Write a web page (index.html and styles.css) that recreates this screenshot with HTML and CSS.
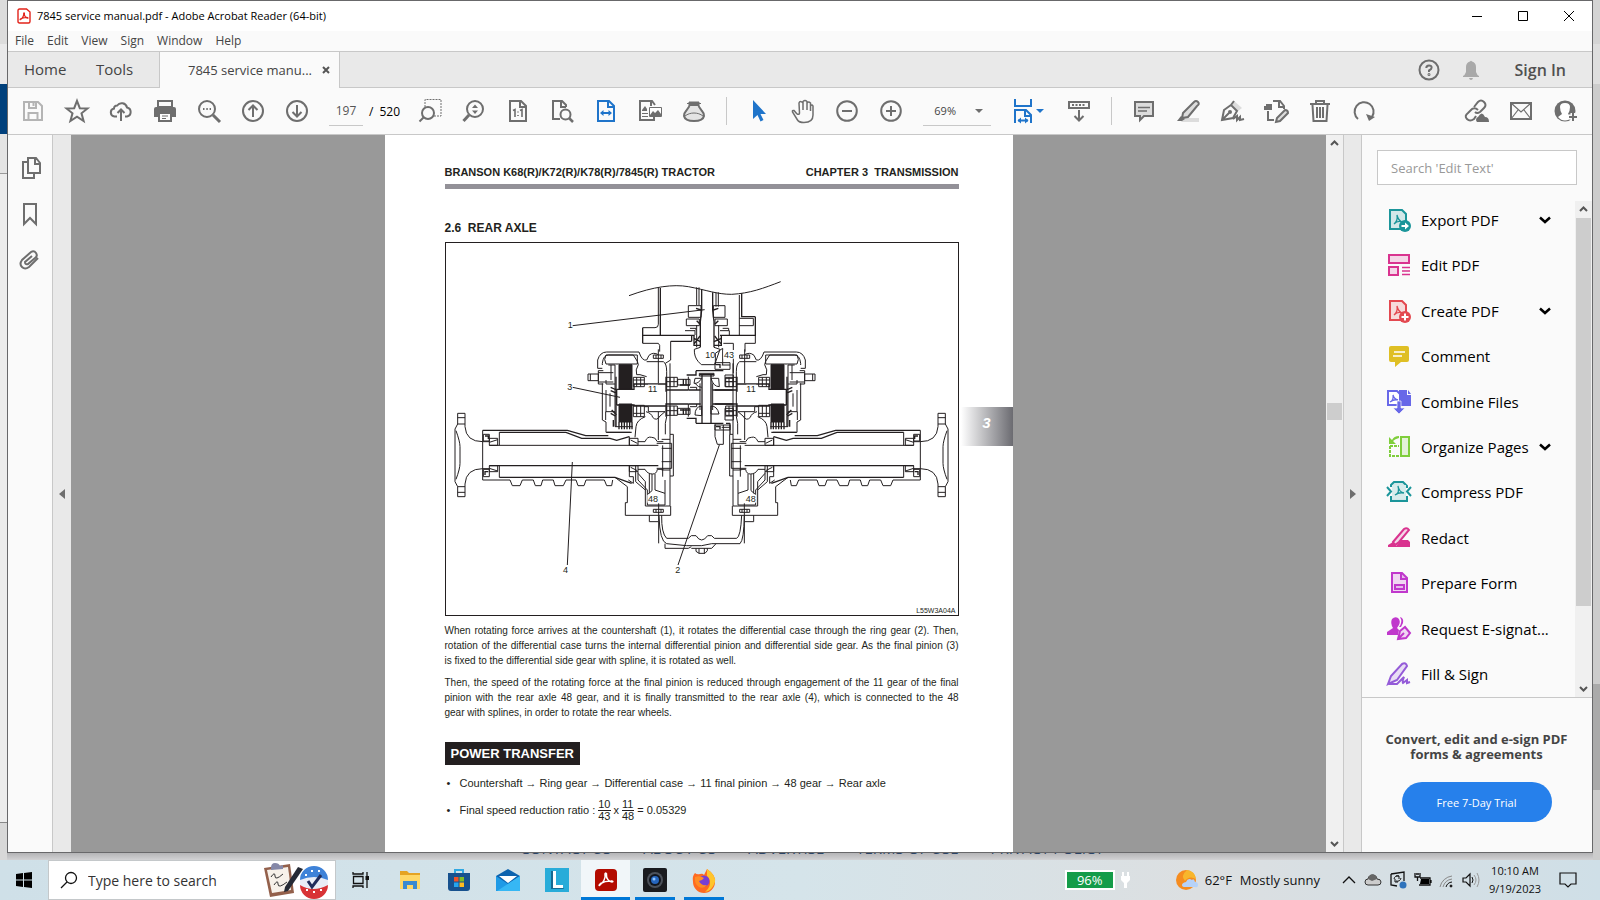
FILE: index.html
```html
<!DOCTYPE html>
<html lang="en">

<head>
    <meta charset="UTF-8">
    <meta name="viewport" content="width=device-width, initial-scale=1.0">
    <title>7845 service manual.pdf - Adobe Acrobat Reader (64-bit)</title>
    <link rel="stylesheet" href="styles.css">
</head>

<body>
    <div class="desktop">
        <div class="window">
            <!-- Title bar -->
            <header class="title-bar">
                <svg class="app-icon" width="14" height="16" viewBox="0 0 14 16"><path d="M1 2.5Q1 1 2.500 1H9.500L13 4V13.500Q13 15 11.500 15H2.500Q1 15 1 13.500Z" fill="#fff" stroke="#e2231a" stroke-width="1.400"/><path d="M3.500 11.500C5.500 10.500 7 7.500 6.700 5.500C6.500 4.500 7.600 4.500 7.400 5.700C7 8 9 10 10.500 10.200C11.500 10.300 11 9.200 9.500 9.300C7 9.400 5 10 3.800 10.700C2.800 11.300 3 12 3.500 11.500" fill="none" stroke="#e2231a" stroke-width="1.200"/></svg>
                <h1>7845 service manual.pdf - Adobe Acrobat Reader (64-bit)</h1>
                <div class="window-controls">
                    <button aria-label="Minimize"><svg width="12" height="12"><path d="M1 6.500H11"/></svg></button>
                    <button aria-label="Maximize"><svg width="12" height="12"><path d="M1.500 1.500H10.500V10.500H1.500Z"/></svg></button>
                    <button aria-label="Close"><svg width="12" height="12"><path d="M1 1L11 11M11 1L1 11"/></svg></button>
                </div>
            </header>

            <nav class="menu-bar">
                <a href="#">File</a>
                <a href="#">Edit</a>
                <a href="#">View</a>
                <a href="#">Sign</a>
                <a href="#">Window</a>
                <a href="#">Help</a>
            </nav>

            <!-- Tabs -->
            <div class="tab-bar">
                <a href="#" class="tab-link">Home</a>
                <a href="#" class="tab-link">Tools</a>
                <div class="tab">
                    <span>7845 service manu...</span>
                    <button aria-label="Close tab"><svg width="10" height="10"><path d="M2 2L8 8M8 2L2 8" stroke="#555" stroke-width="2"/></svg></button>
                </div>
                <div class="account">
                    <button aria-label="Help"><svg width="24" height="24" class="ico"><circle cx="12" cy="12" r="9.500"/><path d="M9.300 10Q9.300 7.500 12 7.500T14.600 9.800Q14.600 11.200 12 12.500V14"/><circle cx="12" cy="16.500" r=".5"/></svg></button>
                    <button aria-label="Notifications"><svg width="24" height="24"><path d="M11 3.500Q12 2 13 3.500Q17 4.500 17 9V14Q18 17 20 18V19H4V18Q6 17 7 14V9Q7 4.500 11 3.500ZM10 20H14Q13.500 22 12 22T10 20Z" fill="#a9a9a9"/></svg></button>
                    <a href="#" class="sign-in">Sign In</a>
                </div>
            </div>

            <!-- Toolbar -->
            <div class="toolbar">
                <button aria-label="Save" class="muted"><svg width="24" height="24" class="ico"><path d="M3 3H17L21 7V21H3Z"/><path d="M8 3V9H15V3M12.500 4V7M7.500 21V14H16.500V21"/></svg></button>
                <button aria-label="Star"><svg width="24" height="24" class="ico"><path d="M12 1.800L14.800 9.200L22.500 9.500L16.500 14.300L18.600 22L12 17.600L5.400 22L7.500 14.300L1.500 9.500L9.200 9.200Z"/></svg></button>
                <button aria-label="Upload"><svg width="24" height="24" class="ico"><path d="M8 17.500H5.500A4 4 0 0 1 5 9.600A3 3 0 0 1 8.200 6.500A5.500 5.500 0 0 1 18 8.500A4.600 4.600 0 0 1 18 17.500H16M12 22V11M8.500 14L12 10.500L15.500 14"/></svg></button>
                <button aria-label="Print"><svg width="24" height="24"><path d="M5 2H19V8H5Z" fill="none" stroke="#6e6e6e" stroke-width="2"/><path d="M3 8H21Q23 8 23 10V18H1V10Q1 8 3 8Z" fill="#6e6e6e"/><path d="M6 14H18V22H6Z" fill="#fff" stroke="#6e6e6e" stroke-width="2"/><path d="M9 17H15M9 19.500H13" stroke="#6e6e6e"/></svg></button>
                <button aria-label="Find"><svg width="24" height="24" class="ico"><circle cx="10" cy="10" r="8"/><path d="M16 16L23 23" stroke-width="3"/><path d="M6 10H7.500M9.300 10H10.800M12.600 10H14"/></svg></button>
                <button aria-label="Previous page"><svg width="24" height="24" class="ico"><circle cx="12" cy="12" r="10"/><path d="M12 18V7M7.500 11L12 6.500L16.500 11"/></svg></button>
                <button aria-label="Next page"><svg width="24" height="24" class="ico"><circle cx="12" cy="12" r="10"/><path d="M12 6V17M7.500 13L12 17.500L16.500 13"/></svg></button>
                <div class="page-number">
                    <input type="text" value="197" aria-label="Page number">
                    <span>/</span>
                    <span>520</span>
                </div>
                <button aria-label="Marquee zoom"><svg width="24" height="24" class="ico"><path d="M7 8V.5H23V17H16" stroke-width="1" stroke-dasharray="2 1"/><circle cx="10" cy="14" r="6"/><path d="M5.500 18.500L1.500 22.500"/></svg></button>
                <button aria-label="Dynamic zoom"><svg width="24" height="24" class="ico"><circle cx="13" cy="10" r="8"/><path d="M7 16L1.500 22" stroke-width="3"/><path d="M10 9L13 5.500L16 9ZM10 11.500L13 15L16 11.500Z" fill="#6e6e6e" stroke="none"/></svg></button>
                <button aria-label="Actual size"><svg width="24" height="24" class="ico"><path d="M4 2H15L20 7V22H4ZM14 2V8H20"/><path d="M7 11.500L9 10.500V18M14 11.500L16 10.500V18M12 12.500V13.500M12 16V17" stroke-width="1.600"/></svg></button>
                <button aria-label="Zoom to page"><svg width="24" height="24" class="ico"><path d="M10 20H3V2H12L16 6V8M11 2V8H16"/><circle cx="15.500" cy="15.500" r="5"/><path d="M19 19L23 23" stroke-width="2.500"/></svg></button>
                <button aria-label="Fit width" class="active"><svg width="24" height="24" class="ico"><path d="M4 2H15L20 7V22H4ZM14 2V8H20M7 14H17"/><path d="M9.500 11L6 14L9.500 17ZM14.500 11L18 14L14.500 17Z" fill="currentColor" stroke="none"/></svg></button>
                <button aria-label="Read mode"><svg width="24" height="24" class="ico"><path d="M17 6L14 2H2V21H16V18M13 2V7"/><path d="M11.500 8.500H23.500V17.500H11.500Z" fill="#fff" stroke-width="1"/><path d="M12 16L15 12L17 14L20 11L23 15V17H12ZM4 11L7 7L9 10V12H4ZM4 14H10V15H4ZM4 17H10V18H4Z" fill="#6e6e6e" stroke="none"/></svg></button>
                <button aria-label="3D view"><svg width="24" height="24" class="ico"><path d="M7 3H17V7H7Z" fill="#6e6e6e" stroke-width="1"/><path d="M7.500 7L4 12Q2 14 2 17Q3 22 12 22T22 17Q22 14 20 12L16.500 7" fill="#e4e4e4"/><path d="M3 17C8 13 16 13 21 17M5 4.500H19" stroke-width="1"/></svg></button>
                <span class="divider"></span>
                <button aria-label="Select" class="active"><svg width="24" height="24"><path d="M6 1V20L10.500 16L13.500 22.500L16.500 21L13.500 15H19Z" fill="#1f74ca"/></svg></button>
                <button aria-label="Hand"><svg width="24" height="24" class="ico thin"><path d="M6 15L3 11.500Q1 11 1.500 13L6.500 21Q8 23.500 13 23.500Q22 23.500 22 16V7Q21 5 19.500 7V12M19.500 8V4Q17.500 2 16 4V11M16 5V2.500Q14 .5 12 2.500V11M12 4Q9 1 8 4L8.500 14Q8.500 16 6 15"/></svg></button>
                <button aria-label="Zoom out"><svg width="24" height="24" class="ico"><circle cx="12" cy="12" r="9.800"/><path d="M7 12H17"/></svg></button>
                <button aria-label="Zoom in"><svg width="24" height="24" class="ico"><circle cx="12" cy="12" r="9.800"/><path d="M7 12H17M12 7V17"/></svg></button>
                <button class="zoom-level"><span>69%</span><i class="caret"></i></button>
                <button aria-label="Page display" class="active"><svg width="24" height="24" class="ico"><path d="M4 0V7H20V0M4 24V11H15L20 16V24M14 11V17H20M7 21.500H17"/><path d="M10 18.500L6.500 21.500L10 24.500ZM14 18.500L17.500 21.500L14 24.500Z" fill="currentColor" stroke="none"/></svg></button>
                <i class="caret caret-blue"></i>
                <button aria-label="Keyboard"><svg width="24" height="24" class="ico"><path d="M2 3H22V9H2Z"/><path d="M5 6H19" stroke-dasharray="2 1.500"/><path d="M12 11V21M7.500 17L12 21.500L16.500 17"/></svg></button>
                <span class="divider"></span>
                <button aria-label="Comment"><svg width="24" height="24" class="ico"><path d="M3 3H21V17H12L8 21V17H3Z" fill="#dcdcdc"/><path d="M6 8.500H18M6 12H15" stroke-width="1.300"/></svg></button>
                <button aria-label="Highlight"><svg width="24" height="24" class="ico"><path d="M8 19H23V23H5Z" fill="#dcdcdc" stroke="none"/><path d="M7 14L18 3Q20 1 22 3T21 7L12 18L6 19Z" fill="#dcdcdc"/><path d="M1 22L5 17L9 20L6 22Z" fill="#6e6e6e" stroke="none"/></svg></button>
                <button aria-label="Sign"><svg width="24" height="24" class="ico"><path d="M14 2L22 9L18 12L12 6Z" fill="#dcdcdc" stroke="none"/><path d="M2 21L4 11L11 6L17 12L13 19ZM11 6L14 2M2 21L9 14"/><circle cx="10" cy="13" r="1" /><path d="M13 20L17 17L17 21L20 18L20 21L24 20"/></svg></button>
                <button aria-label="Edit pages"><svg width="24" height="24" class="ico"><path d="M9 2H16L20 7V10M15 2V8H20M4 12V21H10"/><path d="M0 7H2V5H8V11H0Z" fill="#6e6e6e" stroke="none"/><path d="M12 23L13 19L21 11Q24 11 24 14L16 22Z" fill="#dcdcdc"/></svg></button>
                <button aria-label="Delete"><svg width="24" height="24" class="ico"><path d="M2 5H22M8 5V2H16V5M4.500 6L5.500 22H18.500L19.500 6M9 8V19M12 8V19M15 8V19"/></svg></button>
                <button aria-label="Rotate"><svg width="24" height="24" class="ico"><path d="M6 20A9.500 9.500 0 1 1 20 18"/><path d="M14 15L23 18L17 22Z" fill="#6e6e6e" stroke="none"/></svg></button>
                <div class="share">
                    <button aria-label="Share link"><svg width="24" height="24" class="ico"><path d="M9 8L13 3Q16 0 19 3T19 9L15 13Q12 15 10 13M11 17L9 20Q5 23 2 20T3 14L7 10Q10 8 13 11"/><path d="M12 23A3 3 0 0 1 13 18Q17 11 20 18Q24 18 24 23Z" fill="#6e6e6e" stroke="none"/></svg></button>
                    <button aria-label="Send by mail"><svg width="24" height="24" class="ico"><path d="M2 4H22V20H2Z"/><path d="M2 4L12 13L22 4M2 20L9 11M22 20L15 11" stroke-width="1.200"/></svg></button>
                    <button aria-label="Invite"><svg width="24" height="24"><circle cx="12" cy="12" r="10.500" fill="#6e6e6e"/><path d="M9 15Q7 12 7 8Q7 4 12 4T17 8Q17 12 15 15L19 18Q16 21.500 12 21.500T5 18Z" fill="#fff"/><path d="M20 14V22M16 18H24" stroke="#fafafa" stroke-width="5"/><path d="M20 14V22M16 18H24" stroke="#6e6e6e" stroke-width="2"/></svg></button>
                </div>
            </div>

            <main class="workspace">
                <aside class="nav-rail">
                    <button aria-label="Page thumbnails"><svg width="24" height="24" class="ico"><path d="M10 2H18L22 7V17H10ZM17 2V8H22M9 6H5V22H16V18"/></svg></button>
                    <button aria-label="Bookmarks"><svg width="24" height="24" class="ico"><path d="M6 2H18V22L12 16L6 22Z"/></svg></button>
                    <button aria-label="Attachments"><svg width="24" height="24" class="ico"><path d="M20 10L11 19Q7 22 4 19T4 12L13 4Q16 2 18 5T17 10L10 16Q7 17 7 14L14 8"/></svg></button>
                </aside>
                <button class="collapse" aria-label="Collapse navigation"><i class="arrow-left"></i></button>

                <section class="doc-view">
                    <article class="page">
                        <div class="page-head">
                            <span>BRANSON K68(R)/K72(R)/K78(R)/7845(R) TRACTOR</span>
                            <span>CHAPTER 3&nbsp; TRANSMISSION</span>
                        </div>
                        <h2>2.6&nbsp; REAR AXLE</h2>
                        <figure>
                            <svg class="drawing" viewBox="18 -51 1536 1116">
                                <defs>
                                    <g id="half-axle">
                                        <!-- hub flange -->
                                        <path d="M53 492V460H75V500Q78 545 128 545H148M53 492L45 507V665L53 680V710H75V672Q78 626 128 626H148M53 473H75M53 492H75M53 680H75M53 697H75M48 512Q60 545 60 560V610Q60 626 48 658"/>
                                        <!-- axle tube -->
                                        <path class="bold" d="M128 511H382L437 527H505M178 517H378L425 535H510L530 541L568 530M148 617H655M178 652H525L575 670"/>
                                        <path d="M148 556H655M178 517V556M178 617V652M128 511V660H210L217 677H240L247 660H280L286 677H303L308 660H340L345 677H370L378 660H408L414 677H432L438 660H493L500 677H515L518 660M525 652L562 680V728H556V766H692V738M568 530V556M568 617V650H580V670L565 660"/>
                                        <path d="M130 523H148V543H130ZM130 628H148V650H130ZM148 535H173V556H148ZM148 617H173V635H148ZM148 547L173 539M148 625L173 633M568 535H594V556H568ZM568 617H594V635H568ZM572 540L592 550M572 622L592 632"/>
                                        <path class="bold" d="M135 528H145V537M135 645V635H145"/>
                                        <!-- final gear -->
                                        <path d="M594 545H615Q622 528 635 532Q645 530 652 545H670M594 628H615Q622 642 638 642Q650 642 652 628H670M650 550H695V625H650M665 538H690M665 565H695M665 605H695M665 630H690M700 523V648H690V738H616V690L587 665V617M690 648V523H700M622 735V690L594 660V635M628 700V642M645 642V690L675 700M675 660V735H622M636 642V692L622 704M656 730V850M668 556V650M594 640L616 665V690"/>
                                        <path d="M628 766V785H655M640 748H670V757H640ZM640 285H670V295H640ZM648 748V757M663 748V757M648 285V295M663 285V295"/>
                                        <!-- brake housing -->
                                        <path d="M487 325H473V300Q480 276 500 276H597Q606 304 620 300L627 286Q640 275 655 284M487 315V310Q490 285 505 285H580L592 304M498 285H592V312H498Q490 298 498 285ZM592 304L595 314Q585 330 590 344H600L620 350M620 305H670Q680 310 680 335V470L676 490V523M616 470Q590 480 588 500L585 532M655 268V370M655 455V540M690 310V523M487 370V480L498 486V517H570M498 360V372H525M497 480V455H525M505 315H525V500H578"/>
                                        <path d="M444 342H475V362H444ZM451 342V362M475 332H490M475 332V372H490M475 338H520M475 366H520M513 315V360M498 390V455M510 400V440"/>
                                        <path class="bold" d="M528 350V500M512 382L530 390M512 392L526 398M515 450L530 465M512 460L526 468M520 480V500M500 517H575"/>
                                        <!-- disc packs -->
                                        <path class="solid" d="M537 314H576V388H537ZM537 432H576V486H537Z"/>
                                        <path class="bold" d="M537 486V508M545 486V508M553 486V508M561 486V508M569 486V508M576 486V508"/>
                                        <!-- pinion shaft -->
                                        <path class="bold" d="M530 388H582V372H676M530 435H582V438H676M530 388V435M676 390H745M676 432H745M678 350V395M678 430V470"/>
                                        <path d="M580 352H613V380H580ZM580 436H613V470H580ZM590 352V380M602 352V380M590 436V470M602 436V470M613 440H625V455H675M618 455Q635 460 638 472Q650 485 660 468L675 455M680 352H712V380H680ZM680 438H712V466H680ZM690 352V380M702 352V380M690 438V466M702 438V466M580 360H613M580 460H613M680 365H712M680 452H712"/>
                                    </g>
                                </defs>
                                <g class="ink">
                                    <use href="#half-axle"/>
                                    <use href="#half-axle" transform="translate(1569 0) scale(-1 1)"/>
                                    <!-- upper case -->
                                    <path d="M567 107C640 80 700 72 745 80C800 90 830 103 875 103C930 100 970 85 1022 65"/>
                                    <path class="bold" d="M661 84V226M608 226H763M608 203V250M840 226H946V170M905 100V170H946M692 244H755M755 244V226M608 226V250"/>
                                    <path d="M655 84V193Q655 203 645 203H608M608 250H655L659 256V275M692 244V300L676 310M898 105V226M898 175H940V197H898M946 226V250H915V275M880 250H850M880 250V340M770 82V135M777 82V135M828 97V140M835 97V140"/>
                                    <!-- input shaft and bevel pinion -->
                                    <path class="bold" d="M785 88V150L781 185V262M818 97V150L822 185V262"/>
                                    <path d="M745 137H783V172H745ZM820 137H855V172H820ZM739 177H778V197H739ZM825 177H862V197H825ZM735 212H765V225M840 212H868V225M750 205H768V212M848 205H866V212M770 195V262M836 195V262M781 262L763 268Q762 290 775 305L784 314H824L840 268L822 262M826 315V280L848 265V315"/>
                                    <path class="bold" d="M762 225V256H781M762 235L781 245M763 251L780 228M844 225V256H822M844 235L822 245M842 251L824 228M768 145L783 150M835 145L820 150M770 182L780 192M835 182L825 192"/>
                                    <!-- differential -->
                                    <path class="bold" d="M768 332H850M778 344H822M786 344V490H813V344M745 390H782M745 432H782M818 390H880M818 432H880M768 332V345H740M768 490H850M740 475H768V490M720 375H750M720 450H750"/>
                                    <path d="M778 340H822V348H778ZM765 355H785Q775 372 762 370L765 355M765 370Q775 383 785 382M813 355Q820 380 838 380L836 355ZM765 465Q765 440 785 438V467ZM813 438Q832 438 837 462H813ZM713 358H750V375H713ZM713 445H750V463H713ZM745 350V390M745 432V470M750 382H770V390M750 440H770V432M825 308H870V328H825ZM825 495H870V510H825ZM825 490V530L832 553H850V495M845 315H870M845 502H870M780 370V450M818 370V450M855 345H880V380H855ZM855 445H880V480H855ZM855 355H880M855 365H880M855 455H880M855 468H880"/>
                                    <path class="bold" d="M730 357V375M738 357V375M730 448V463M738 448V463M828 314H840V324M828 500H840V508M870 490V523M858 490H870"/>
                                    <!-- oil pan -->
                                    <path d="M665 766Q664 820 680 835H745L754 827H768Q776 840 785 840T803 827H815L823 835H890Q902 830 905 766"/>
                                    <path d="M657 766Q659 845 680 851L740 857H785L815 851H900Q912 840 913 766M675 851V865H745L754 860M828 851L815 865H754M768 865V874L777 880H795L802 872V865M777 865V880M793 865V880"/>
                                    <!-- leaders -->
                                    <path d="M398 197L794 149M398 382L540 412M397 606L382 915M838 555L714 915"/>
                                </g>
                                <g class="callouts">
                                    <rect x="793" y="270" width="32" height="26"/><rect x="850" y="270" width="34" height="26"/>
                                    <rect x="624" y="374" width="30" height="24"/><rect x="919" y="374" width="30" height="24"/>
                                    <rect x="622" y="704" width="33" height="24"/><rect x="916" y="704" width="33" height="24"/>
                                    <text x="383" y="205">1</text>
                                    <text x="382" y="389">3</text>
                                    <text x="369" y="938">4</text>
                                    <text x="706" y="938">2</text>
                                    <text x="796" y="293">10</text>
                                    <text x="852" y="293">43</text>
                                    <text x="624" y="396">11</text>
                                    <text x="919" y="396">11</text>
                                    <text x="624" y="726">48</text>
                                    <text x="917" y="726">48</text>
                                </g>
                            </svg>
                            <figcaption>L55W3A04A</figcaption>
                        </figure>
                        <p>
                            <span>When rotating force arrives at the countershaft (1), it rotates the differential case through the ring gear (2). Then,</span>
                            <span>rotation of the differential case turns the internal differential pinion and differential side gear. As the final pinion (3)</span>
                            <span>is fixed to the differential side gear with spline, it is rotated as well.</span>
                        </p>
                        <p>
                            <span>Then, the speed of the rotating force at the final pinion is reduced through engagement of the 11 gear of the final</span>
                            <span>pinion with the rear axle 48 gear, and it is finally transmitted to the rear axle (4), which is connected to the 48</span>
                            <span>gear with splines, in order to rotate the rear wheels.</span>
                        </p>
                        <h3>POWER TRANSFER</h3>
                        <ul class="notes">
                            <li>Countershaft → Ring gear → Differential case → 11 final pinion → 48 gear → Rear axle</li>
                            <li>
                                <span>Final speed reduction ratio :</span>
                                <span class="fraction"><span>10</span><span>43</span></span>
                                <span>x</span>
                                <span class="fraction"><span>11</span><span>48</span></span>
                                <span>= 0.05329</span>
                            </li>
                        </ul>
                        <div class="chapter-tab">3</div>
                    </article>
                </section>

                <div class="scrollbar doc-scroll">
                    <svg width="15" height="17"><path d="M4 10L7.500 6.500L11 10"/></svg>
                    <div class="track"><div class="thumb"></div></div>
                    <svg width="15" height="17"><path d="M4 7L7.500 10.500L11 7"/></svg>
                </div>
                <button class="collapse collapse-right" aria-label="Collapse tools"><i class="arrow-right"></i></button>

                <!-- Tools pane -->
                <aside class="tools-pane">
                    <div class="search-wrap">
                        <input type="text" class="tool-search" placeholder="Search 'Edit Text'" aria-label="Search tools">
                    </div>
                    <div class="tools-scroll">
                        <ul class="tools">
                            <li><a href="#"><svg class="teal" width="24" height="24"><path class="doc" d="M3 2H15L19 6V21H3Z"/><path class="line" d="M7 16Q11 13 10 7Q11 12 15 14Q11 12 7 16"/><circle cx="18" cy="18" r="6" fill="currentColor"/><path d="M14.500 17H18V14.500L22 18L18 21.500V19H14.500Z" fill="#fff"/></svg>Export PDF</a><svg class="chevron" width="12" height="8"><path d="M1 1.500L6 6L11 1.500"/></svg></li>
                            <li><a href="#"><svg class="pink" width="24" height="24"><path class="doc" d="M2 2H22V10H2ZM2 14H11V22H2Z"/><path class="line" d="M15 14.500H23M15 18H23M15 21.500H23"/></svg>Edit PDF</a></li>
                            <li><a href="#"><svg class="red" width="24" height="24"><path class="doc" d="M3 2H15L19 6V21H3Z"/><path class="line" d="M7 16Q11 13 10 7Q11 12 15 14Q11 12 7 16"/><circle cx="18" cy="18" r="6" fill="currentColor"/><path d="M18 14.500V21.500M14.500 18H21.500" stroke="#fff" stroke-width="2"/></svg>Create PDF</a><svg class="chevron" width="12" height="8"><path d="M1 1.500L6 6L11 1.500"/></svg></li>
                            <li><a href="#"><svg class="yellow" width="24" height="24"><path d="M4 2H20Q22 2 22 4V16Q22 18 20 18H14L8 23V18H4Q2 18 2 16V4Q2 2 4 2Z" fill="currentColor"/><path d="M7 8H18M6 12H15" stroke="#fff" stroke-width="1.500"/></svg>Comment</a></li>
                            <li><a href="#"><svg class="indigo" width="24" height="24"><path d="M12 0H20V5H24V16H12Z" fill="currentColor"/><path d="M21 0L24 4H21Z" fill="currentColor"/><path d="M1 1H10L13 4V15H1Z" fill="#fff" stroke="currentColor" stroke-width="2"/><path class="line" d="M3 12Q7 10 6 5Q7 9 11 10Q7 9 3 12"/><path d="M10 11H14V18H18L12 24L6 18H10Z" fill="currentColor" stroke="#fafafa" stroke-width=".7"/></svg>Combine Files</a></li>
                            <li><a href="#"><svg class="green" width="24" height="24"><path class="doc" d="M14 2H22V21H14Z"/><path d="M3 11H12M3 11V21H12" fill="none" stroke="currentColor" stroke-width="2" stroke-dasharray="3 1"/><path d="M2 2V9H9L6 6Q8 4 12 3V1Q7 1 5 5Z" fill="currentColor"/></svg>Organize Pages</a><svg class="chevron" width="12" height="8"><path d="M1 1.500L6 6L11 1.500"/></svg></li>
                            <li><a href="#"><svg class="teal" width="24" height="24"><path class="doc" d="M4 7V5L7 2H16L20 6V8M4 16V21H20V16"/><path d="M5 5H19V19H5Z" fill="#d8ecec"/><path class="line" d="M8 15Q13 13 11 6Q12 12 17 13Q12 12 8 15"/><path d="M0 7L4 11.500L0 16M24 7L20 11.500L24 16" fill="none" stroke="currentColor" stroke-width="2"/></svg>Compress PDF</a></li>
                            <li><a href="#"><svg class="pink" width="24" height="24"><path d="M9 20L14 14H21L23 16V21H1V19L6 16L9 18Z" fill="currentColor"/><path class="doc" d="M6 16L17 3Q20 1 22 4L12 16L8 19Z"/></svg>Redact</a></li>
                            <li><a href="#"><svg class="magenta" width="24" height="24"><path class="doc" d="M5 2H15L20 7V21H5Z"/><path class="doc" d="M14 2V8H20M8 14H17V18H8Z"/></svg>Prepare Form</a></li>
                            <li><a href="#"><svg class="magenta" width="24" height="24"><path d="M0 18V15L6 11Q3 6 5 2Q8-1 11 1Q14 4 12 8L10 11L12 13L11 18ZM13 0Q17 1 16 6L14 10H12Q16 5 13 0Z" fill="currentColor"/><path class="doc" d="M11 22L13 14L18 10L23 16L19 21ZM11 22L17 16"/></svg>Request E-signat...</a></li>
                            <li><a href="#"><svg class="violet" width="24" height="24"><path class="doc" d="M1 22L4 14L15 2Q19 0 20 4L10 18L1 22Z"/><path d="M2 22H10L17 15Q15 20 16 21L20 18V21L23 20" fill="none" stroke="currentColor" stroke-width="2"/></svg>Fill &amp; Sign</a></li>
                        </ul>
                        <div class="scrollbar tool-scroll">
                            <svg width="15" height="17"><path d="M4 10L7.500 6.500L11 10"/></svg>
                            <div class="track"><div class="thumb"></div></div>
                            <svg width="15" height="17"><path d="M4 7L7.500 10.500L11 7"/></svg>
                        </div>
                    </div>
                    <div class="promo">
                        <p>Convert, edit and e-sign PDF forms &amp; agreements</p>
                        <button>Free 7-Day Trial</button>
                    </div>
                </aside>
            </main>
        </div>
        <!-- bottom edge of the browser behind the window -->
        <div class="behind">
            <span>CONTACT US</span><span>ABOUT US</span><span>ADVERTISE</span><span>TERMS OF USE</span><span>PRIVACY POLICY</span>
        </div>
    </div>

    <!-- Taskbar -->
    <footer class="taskbar">
        <button class="start" aria-label="Start"><svg width="16" height="16"><path d="M0 2L7 1V7.500H0ZM8 1L16 0V7.500H8ZM0 8.500H7V15L0 14ZM8 8.500H16V16L8 15Z"/></svg></button>
        <label class="search">
            <svg width="18" height="18"><circle cx="11" cy="7" r="5.500" fill="none" stroke="#111" stroke-width="1.300"/><path d="M7 11L1 17" stroke="#111" stroke-width="1.300"/></svg>
            <input type="text" placeholder="Type here to search" aria-label="Type here to search">
            <svg width="66" height="36"><path d="M1 6L27 2L31 31L7 35Z" fill="#93604b"/><path d="M4 8L25 5L28 28L9 31Z" fill="#f7f1ea"/><path d="M8 6Q8 1 12 1T17 4L20 3V7L8 8Z" fill="#8588a8"/><path d="M8 15Q12 9 12 14T20 12M11 23Q15 17 15 22T24 20" fill="none" stroke="#333"/><path d="M35 5L40 7L25 29L21 30L22 25Z" fill="#252a35"/><circle cx="51" cy="20" r="14" fill="#e9edf6"/><path d="M37 18A14 14 0 0 1 65 18Q51 12 37 18Z" fill="#3e82d8"/><path d="M37 23Q50 31 65 23A14 14 0 0 1 37 23Z" fill="#d83336"/><path d="M45 19L49 25L58 13" fill="none" stroke="#202c5a" stroke-width="3"/><path d="M42 13H44M48 9H50M55 9H57M43 28H45M50 30H52M57 28H59" stroke="#fff" stroke-width="2"/></svg>
        </label>
        <nav class="apps">
            <button aria-label="Task view"><svg width="18" height="18"><path d="M1 1V3H11V1M1 17V15H11V17M1.500 5.500H11V12.500H1.500ZM15 1V5M15 9V17" fill="none" stroke="#111" stroke-width="1.300"/><path d="M13.500 5H17V9H13.500Z" fill="#111"/></svg></button>
            <button aria-label="File Explorer"><svg width="24" height="24"><path d="M2 3H9L11 5H22V20H2Z" fill="#e5a323"/><path d="M2 7H22V21H2Z" fill="#ffd766"/><path d="M5 13H19V21H15V17H9V21H5Z" fill="#3b8ad0"/></svg></button>
            <button aria-label="Store"><svg width="24" height="24"><path d="M8 6V2H16V6" fill="none" stroke="#30a8e2" stroke-width="2"/><path d="M1 5H23V20Q23 23 20 23H4Q1 23 1 20Z" fill="#17518e"/><path d="M7 9H11.500V13.500H7Z" fill="#f15227"/><path d="M12.500 9H17V13.500H12.500Z" fill="#80bb27"/><path d="M7 14.500H11.500V19H7Z" fill="#25a5ee"/><path d="M12.500 14.500H17V19H12.500Z" fill="#ffbb20"/></svg></button>
            <button aria-label="Mail"><svg width="26" height="24"><path d="M1 8L13 1L25 8V23H1Z" fill="#0d63ae"/><path d="M4 8H22L13 15Z" fill="#fff"/><path d="M1 8L13 16L25 8V23H1Z" fill="#1f9ae6"/><path d="M25 8V23H2Z" fill="#36b7f4"/></svg></button>
            <button aria-label="Lenovo Vantage"><svg width="24" height="24"><path d="M0 0H24V24H0Z" fill="#28acd9"/><path d="M6 3H10L9 18H17L19 21H6Z" fill="#176a92"/><path d="M8 3H11V17H18V20H8Z" fill="#fff"/></svg></button>
            <button aria-label="Acrobat Reader" class="current"><svg width="22" height="22"><rect width="22" height="22" rx="4" fill="#b30b00"/><path d="M5 16C8 14 11 9 10 5C10 3.500 12 4 11.500 6C11 9 14 13 17 13C18.500 13 18 11.500 16 12C12 12 8 13 5.500 14.500C3.500 16 4 17 5 16" fill="none" stroke="#fff" stroke-width="1.500"/></svg></button>
            <button aria-label="Camera" class="running"><svg width="24" height="24"><rect width="24" height="24" rx="2" fill="#191b1f"/><circle cx="12" cy="12" r="8" fill="#4c525b"/><circle cx="12" cy="12" r="6" fill="#10151e"/><circle cx="12" cy="12" r="4" fill="#2565bd"/><circle cx="11" cy="11" r="1.500" fill="#8cc6ff"/></svg></button>
            <button aria-label="Firefox" class="running"><svg width="24" height="24"><path d="M3 5Q5 7 8 6Q11 5 12 7L15 1Q24 7 23 14A11 11 0 0 1 1 14Q0 8 3 5Z" fill="#ff6a20"/><path d="M15 1Q24 7 23 14Q20 23 13 24Q22 16 15 8Z" fill="#ffc52c"/><circle cx="12" cy="13" r="5.500" fill="#793fd3"/><path d="M3 9Q8 7 12 10Q10 13 7 13Q9 18 15 17Q12 21 7 19Q2 16 3 9Z" fill="#ff8c25"/></svg></button>
        </nav>
        <div class="battery"><span>96%</span></div>
        <svg class="plug" width="12" height="18"><path d="M3 1V5M8 1V5" stroke="#fff" stroke-width="2"/><path d="M1 5H10V9L7 12V17H4V12L1 9Z" fill="#fff"/></svg>
        <a href="#" class="weather"><svg width="24" height="24"><circle cx="11" cy="12" r="10" fill="#f58c20"/><path d="M12 2Q20 3 21 11Q14 7 10 13Q5 8 12 2Z" fill="#f8b62c"/><path d="M10 19Q7 19 7 17T11 14Q13 9 17 12Q19 10 20 14Q23 14 23 17T20 19Z" fill="#b6d2f8"/></svg><span>62°F</span><span>Mostly sunny</span></a>
        <div class="tray">
            <svg width="16" height="16"><path d="M2 11L8 5L14 11" fill="none" stroke="#111" stroke-width="1.300"/></svg>
            <svg width="18" height="16"><path d="M4 13Q1 13 1 10T4 7Q5 2 10 3Q13 4 13 7Q17 7 17 10T14 13Z" fill="#ccc" stroke="#333"/><path d="M4 7Q5 2 10 3Q13 4 13 7L8 9Z" fill="#666"/></svg>
            <svg width="18" height="18"><path d="M2 3L15 1V10M2 3V14L8 15" fill="none" stroke="#111" stroke-width="1.300"/><path d="M5 8Q6 4 10 5M10 8V5H7M12 7Q11 11 7 10M6 8V11H9" fill="none" stroke="#111"/><circle cx="14" cy="14" r="3.500" fill="#2f73bc"/></svg>
            <svg width="18" height="16"><path d="M6 6H16V13H5M17 8V11M1 1V5H6V1M3.500 5V9M2 2H5" fill="none" stroke="#111" stroke-width="1.300"/><path d="M7 7H15V12H6Z"/></svg>
            <svg width="16" height="16" fill="none" stroke="#111"><path d="M1 15A14 14 0 0 1 13 4M4 15A11 11 0 0 1 13 7" stroke="#888"/><path d="M7 15A7 7 0 0 1 13 10"/><circle cx="12" cy="14" r="1" fill="#111"/></svg>
            <svg width="18" height="16"><path d="M1 6H4L8 2V14L4 10H1Z" fill="none" stroke="#111" stroke-width="1.200"/><path d="M10 5Q12 8 10 11" fill="none" stroke="#111"/><path d="M12 3Q16 8 12 13M15 1Q19 8 15 15" fill="none" stroke="#999"/></svg>
        </div>
        <time datetime="2023-09-19T10:10"><span>10:10 AM</span><span>9/19/2023</span></time>
        <button class="notify" aria-label="Notifications"><svg width="18" height="18"><path d="M1 2H17V13H12L9 16L6 13H1Z" fill="none" stroke="#111" stroke-width="1.200"/></svg></button>
    </footer>
</body>

</html>
```

FILE: styles.css
```css
* {
    box-sizing: border-box;
}

body {
    margin: 0;
    height: 100vh;
    display: flex;
    flex-direction: column;
    overflow: hidden;
    font-family: "Open Sans", "Noto Sans", sans-serif;
    font-size: 11px;
    color: #444;
}

button {
    border: 0;
    padding: 0;
    background: none;
    color: inherit;
    font: inherit;
    display: flex;
    align-items: center;
    justify-content: center;
}

a {
    color: inherit;
    text-decoration: none;
}

h1, h2, h3, p, ul, figure {
    margin: 0;
    padding: 0;
}

ul {
    list-style: none;
}

svg {
    display: block;
    flex: none;
    overflow: visible;
}

/* Desktop behind the window */
.desktop {
    flex: 1;
    min-height: 0;
    display: flex;
    flex-direction: column;
    padding: 0 7px;
    background:
        linear-gradient(#dcdcdc 44px, #e9e9ea 44px 84px, #00407c 84px 134px, #e4e4e4 134px 173px, #999 173px 174px, #ececec 174px 822px, #888 822px 823px, #d8d8d8 823px) left / 7px 100% no-repeat,
        linear-gradient(#d4d4d4 44px, #dedede 44px 84px, #ccc 84px 684px, #aaa 684px 790px, #ccc 790px) right / 7px 100% no-repeat,
        #c9c9cb;
}

.window {
    flex: 1;
    min-height: 0;
    display: flex;
    flex-direction: column;
    border: 1px solid #68686a;
    background: #fafafa;
}

.behind {
    height: 7px;
    overflow: hidden;
    display: flex;
    justify-content: center;
    gap: 32px;
    padding-left: 24px;
    background: linear-gradient(#b4b4b6, #d2d2d4);
    color: #2c4466;
    font-size: 15px;
    line-height: 1px;
    align-items: flex-start;
}

.behind span {
    margin-top: -5px;
}

/* Title and menu */
.title-bar {
    height: 30px;
    display: flex;
    align-items: center;
    padding-left: 9px;
    background: #fff;
}

.title-bar h1 {
    margin-left: 6px;
    font-size: 11px;
    line-height: 16px;
    font-weight: 400;
    color: #000;
}

.window-controls {
    margin-left: auto;
    display: flex;
}

.window-controls button {
    width: 46px;
    height: 30px;
}

.window-controls path {
    fill: none;
    stroke: #000;
}

.menu-bar {
    height: 21px;
    display: flex;
    align-items: center;
    gap: 13px;
    padding-left: 7px;
    border-bottom: 1px solid #c8c8c8;
    font-size: 12px;
    line-height: 16px;
}

/* Tabs */
.tab-bar {
    height: 36px;
    display: flex;
    background: #e9e9e9;
    border-bottom: 1px solid #c8c8c8;
}

.tab-link {
    padding-left: 16px;
    width: 72px;
    font-size: 15px;
    line-height: 34px;
}

.tab {
    margin-left: 7px;
    height: 36px;
    width: 181px;
    display: flex;
    align-items: center;
    justify-content: flex-end;
    gap: 9px;
    padding-right: 8px;
    border: solid #c8c8c8;
    border-width: 0 1px;
    background: #fafafa;
    font-size: 13px;
}

.account {
    margin-left: auto;
    display: flex;
    align-items: center;
    gap: 18px;
    padding-right: 26px;
}

.sign-in {
    margin-left: 10px;
    padding-left: 4px;
    font-size: 16px;
    line-height: 34px;
    font-weight: 600;
    color: #505050;
}

/* Toolbar */
.toolbar {
    height: 47px;
    flex: none;
    display: flex;
    align-items: center;
    padding: 0 5px 0 3px;
    border-bottom: 1px solid #c8c8c8;
}

.toolbar button {
    width: 44px;
    height: 44px;
    flex: none;
    color: #6e6e6e;
}

.ico {
    fill: none;
    stroke: currentColor;
    stroke-width: 2;
    color: #6e6e6e;
}

.ico.thin {
    stroke-width: 1.5;
}

.active .ico {
    color: #1f74ca;
}

.muted .ico {
    color: #b4b4b4;
}

.page-number {
    width: 89px;
    padding-left: 10px;
    display: flex;
    align-items: center;
    gap: 6px;
    color: #000;
    font-size: 12px;
}

.page-number input {
    width: 34px;
    height: 29px;
    border: 0;
    border-bottom: 1px solid #c8c8c8;
    padding: 0;
    background: none;
    color: #555;
    font: inherit;
    text-align: center;
}

.divider {
    width: 1px;
    height: 28px;
    margin: 0 10px;
    background: #c8c8c8;
}

.toolbar .zoom-level {
    width: 68px;
    height: 29px;
    margin: 0 10px;
    gap: 19px;
    justify-content: flex-end;
    padding-right: 8px;
    border-bottom: 1px solid #c8c8c8;
    color: #444;
    font-size: 11px;
}

.caret {
    border: 4px solid transparent;
    border-top-color: #6e6e6e;
    border-bottom: 0;
}

.caret-blue {
    margin: 0 13px 0 -9px;
    border-top-color: #1f74ca;
}

.share {
    margin-left: auto;
    display: flex;
}

/* Workspace */
.workspace {
    flex: 1;
    min-height: 0;
    display: flex;
}

.nav-rail {
    width: 45px;
    padding: 10px 0;
    border-right: 1px solid #c8c8c8;
}

.nav-rail button {
    width: 44px;
    height: 46px;
}

.collapse {
    width: 18px;
    background: #e9e9e9;
}

.collapse-right {
    border: solid #c8c8c8;
    border-width: 0 1px;
    width: 19px;
}

.arrow-left, .arrow-right {
    border: 5px solid transparent;
}

.arrow-left {
    border-right: 6px solid #6e6e6e;
    border-left: 0;
}

.arrow-right {
    border-left: 6px solid #6e6e6e;
    border-right: 0;
}

.doc-view {
    flex: 1;
    min-width: 0;
    overflow: hidden;
    display: flex;
    justify-content: center;
    background: #999;
}

/* Manual page */
.page {
    position: relative;
    width: 628px;
    padding: 30px 54px 0 60px;
    background: #fff;
    color: #231f20;
    font-family: "Liberation Sans", Arial, sans-serif;
    font-size: 11px;
}

.page-head {
    display: flex;
    justify-content: space-between;
    height: 24px;
    line-height: 14px;
    border-bottom: 5px solid #939198;
    font-weight: 700;
}

.page h2 {
    margin: 32px 0 6px;
    font-size: 12px;
    line-height: 15px;
}

figure {
    position: relative;
    border: 1px solid #231f20;
}

.drawing {
    width: 100%;
    fill: none;
    stroke: #231f20;
    stroke-width: 3;
}

.drawing .bold {
    stroke-width: 4;
}

.drawing .solid {
    fill: #231f20;
}

.callouts {
    stroke: none;
}

.callouts rect {
    fill: #fff;
}

.callouts text {
    font-size: 27px;
    fill: #231f20;
}

figcaption {
    position: absolute;
    right: 2px;
    bottom: 0;
    font-size: 7px;
    line-height: 8px;
}

.page p {
    margin-top: 7px;
    font-size: 10px;
    line-height: 15px;
}

.page p span {
    display: block;
    white-space: nowrap;
    text-align-last: justify;
}

.page p span:last-child {
    text-align-last: left;
}

.page h3 {
    width: max-content;
    margin: 22px 0 10px;
    padding: 0 6px;
    background: #231f20;
    color: #fff;
    font-size: 13px;
    line-height: 23px;
}

.notes li {
    display: flex;
    align-items: center;
    gap: 3px;
    height: 16px;
    margin-bottom: 11px;
    white-space: nowrap;
}

.notes li::before {
    content: "•";
    width: 10px;
    padding-left: 2px;
}

.fraction {
    display: flex;
    flex-direction: column;
    line-height: 11px;
}

.fraction span:first-child {
    border-bottom: 1px solid #231f20;
}

.chapter-tab {
    position: absolute;
    right: 0;
    top: 272px;
    width: 52px;
    height: 39px;
    background: linear-gradient(90deg, #fff, #6b6b71);
    color: #fff;
    font-size: 15px;
    font-style: italic;
    font-weight: 700;
    line-height: 32px;
    text-align: center;
}

/* Scrollbars */
.scrollbar {
    width: 17px;
    padding: 0 1px;
    display: flex;
    flex-direction: column;
    background: #f0f0f0;
}

.scrollbar path {
    fill: none;
    stroke: #555;
    stroke-width: 2;
}

.track {
    flex: 1;
    display: flex;
    flex-direction: column;
}

.thumb {
    background: #cdcdcd;
}

.doc-scroll .track::before {
    content: "";
    flex: 251;
}

.doc-scroll .track::after {
    content: "";
    flex: 415;
}

.doc-scroll .thumb {
    height: 17px;
}

.tool-scroll .thumb {
    height: 84%;
}

/* Tools pane */
.tools-pane {
    width: 230px;
    display: flex;
    flex-direction: column;
}

.search-wrap {
    padding: 15px 15px 12px 15px;
}

.tool-search {
    display: block;
    width: 100%;
    height: 35px;
    padding: 0 13px;
    border: 1px solid #c8c8c8;
    background: #fff;
    color: #444;
    font: 13px "Open Sans", sans-serif;
}

.tool-search::placeholder {
    color: #999;
    opacity: 1;
}

.tools-scroll {
    flex: 1;
    min-height: 0;
    display: flex;
}

.tools {
    flex: 1;
    display: flex;
    flex-direction: column;
}

.tools li {
    flex: 1;
    display: flex;
    align-items: center;
    padding: 0 24px 0 25px;
}

.tools a {
    flex: 1;
    display: flex;
    align-items: center;
    gap: 10px;
    color: #000;
    font-size: 15px;
    line-height: 20px;
    white-space: nowrap;
}

.tools .doc {
    fill: currentColor;
    fill-opacity: .18;
    stroke: currentColor;
    stroke-width: 2;
}

.tools .line {
    fill: none;
    stroke: currentColor;
    stroke-width: 1.3;
}

.teal { color: #1b959a; }
.pink { color: #d9338f; }
.red { color: #e34850; }
.yellow { color: #dfbf24; }
.indigo { color: #6868e8; }
.green { color: #7fce3c; }
.magenta { color: #c038cc; }
.violet { color: #945bd8; }

.chevron {
    margin-left: -12px;
    fill: none;
    stroke: #000;
    stroke-width: 2.5;
}

.tool-scroll {
    width: 17px;
    margin-top: 4px;
}

.promo {
    height: 155px;
    padding: 34px 16px 0 15px;
    border-top: 1px solid #c8c8c8;
    display: flex;
    flex-direction: column;
    align-items: center;
}

.promo p {
    font-size: 13px;
    line-height: 15px;
    font-weight: 700;
    text-align: center;
}

.promo button {
    width: 150px;
    height: 40px;
    margin-top: 20px;
    border-radius: 20px;
    background: #2680eb;
    color: #fff;
}

/* Taskbar */
.taskbar {
    height: 40px;
    flex: none;
    display: flex;
    align-items: center;
    background: linear-gradient(90deg, #cfe0e8, #d5e4ea 50%, #dcdfe1 75%, #cfdfe7);
    color: #111;
    font-size: 13px;
}

.start {
    width: 48px;
    height: 40px;
}

.search {
    width: 288px;
    height: 40px;
    display: flex;
    align-items: center;
    padding: 0 6px 0 11px;
    border: 1px solid #c4c8ca;
    background: #fff;
}

.search input {
    flex: 1;
    min-width: 0;
    border: 0;
    padding: 0 0 0 10px;
    font: 14px "Open Sans", sans-serif;
}

.search input::placeholder {
    color: #333;
    opacity: 1;
}

.apps {
    display: flex;
}

.apps button {
    width: 49px;
    height: 40px;
    border-bottom: 3px solid transparent;
    border-top: 3px solid transparent;
}

.apps .current {
    background: #f1f6f9;
    border-top-color: #f1f6f9;
    border-bottom-color: #0078d7;
}

.apps .running {
    background: linear-gradient(#0078d7, #0078d7) center bottom / 40px 3px no-repeat border-box;
}

.battery {
    margin-left: auto;
    width: 50px;
    height: 20px;
    padding: 2px;
    background: #fff;
    color: #fff;
}

.battery span {
    display: block;
    background: #149c49;
    line-height: 16px;
    text-align: center;
}

.plug {
    margin-left: 5px;
}

.weather {
    margin-left: 43px;
    display: flex;
    align-items: center;
    gap: 8px;
}

.weather svg {
    margin-right: -2px;
}

.tray {
    display: flex;
    align-items: center;
    gap: 7px;
    margin-left: 21px;
}

time {
    width: 70px;
    display: flex;
    flex-direction: column;
    align-items: center;
    font-size: 11px;
    line-height: 18px;
}

.notify {
    width: 36px;
    height: 40px;
    margin-right: 14px;
}
```
